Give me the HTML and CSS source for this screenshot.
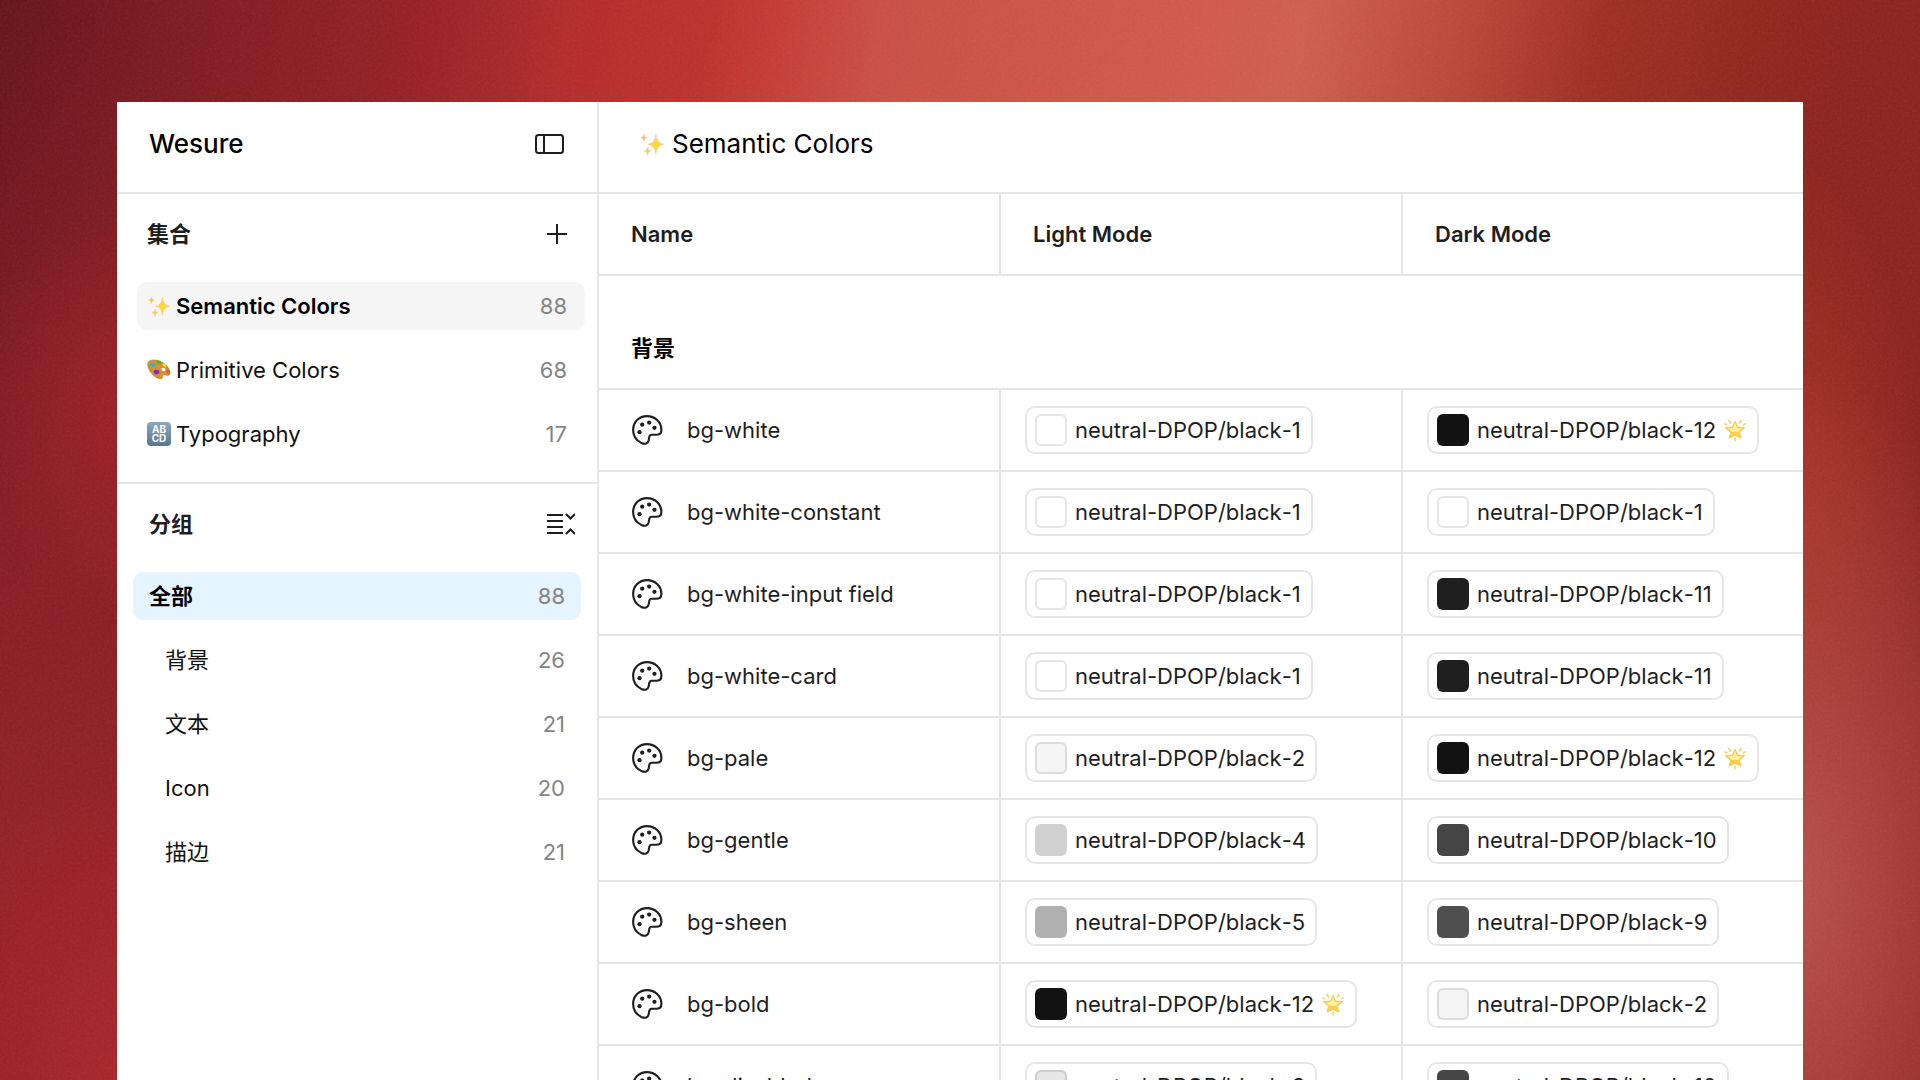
FILE: index.html
```html
<!DOCTYPE html>
<html lang="zh-CN">
<head>
    <meta charset="utf-8">
    <meta name="viewport" content="width=device-width, initial-scale=1">
    <title>Wesure - Semantic Colors</title>
    <link rel="stylesheet" href="styles.css">
</head>
<body>
    <svg class="grain" aria-hidden="true">
        <filter id="noise">
            <feTurbulence type="fractalNoise" baseFrequency="0.4" numOctaves="3" />
            <feColorMatrix type="saturate" values="0" />
        </filter>
        <rect width="100%" height="100%" filter="url(#noise)" />
    </svg>

    <svg class="sprite" aria-hidden="true">
        <symbol id="palette" viewBox="0 0 30 30">
            <path d="M15 2C7.600 2 2 7.600 2 15c0 5 3 9.800 7.600 12.100 3.700 1.600 6.200.8 7-2.600l.6-3.100c.3-1.400 1-1.900 2.200-1.900h4.100c3 0 5-1.600 5-4.600C28.500 7.200 22.300 2 15 2z" fill="none" stroke="#1e1e1e" stroke-width="2" />
            <circle cx="10.500" cy="10" r="2" fill="#1e1e1e" />
            <circle cx="17" cy="8" r="2" fill="#1e1e1e" />
            <circle cx="22" cy="13" r="2" fill="#1e1e1e" />
            <circle cx="8" cy="17" r="2" fill="#1e1e1e" />
        </symbol>
        <symbol id="sparkles" viewBox="0 0 24 24">
            <path d="M15.500 3Q16 11.500 22.500 12.300Q16 13.100 15.500 21.500Q15 13.100 8.500 12.300Q15 11.500 15.500 3z" fill="#fdd835" stroke="#fbc79a" stroke-width=".8" />
            <path d="M4.500 3Q4.800 5.900 7.300 6.200Q4.800 6.500 4.500 9.500Q4.200 6.500 1.700 6.200Q4.200 5.900 4.500 3z" fill="#fcc03c" stroke="#fbc79a" stroke-width=".6" />
            <path d="M8 15Q8.300 18.200 11 18.500Q8.300 18.800 8 22.500Q7.700 18.800 5 18.500Q7.700 18.200 8 15z" fill="#fcc93c" stroke="#fbc79a" stroke-width=".6" />
        </symbol>
        <symbol id="paint" viewBox="0 0 24 24">
            <path d="M1 4.500C2.500 1.500 8 1.200 13 3.200c5.500 2.200 9.300 6.800 10 11.300.3 2.500-1.500 3.300-3.500 2.700-2.300-.7-4-.5-4 1.300 0 1.800-1 2.800-3.200 2.200C6 19.500-.8 9.500 1 4.500z" fill="#d98f2b" stroke="#b8701a" stroke-width=".6" />
            <ellipse cx="16.500" cy="11.500" rx="2.200" ry="1.600" fill="#fff" transform="rotate(30 16.500 11.500)" />
            <ellipse cx="5.500" cy="6.800" rx="3" ry="1.900" fill="#28b5dc" transform="rotate(20 5.500 6.800)" />
            <ellipse cx="11.500" cy="4" rx="2.700" ry="1.500" fill="#3ebc33" transform="rotate(20 11.500 4)" />
            <ellipse cx="17.500" cy="7.200" rx="2.200" ry="1.600" fill="#f4dc23" transform="rotate(40 17.500 7.200)" />
            <ellipse cx="9.500" cy="14" rx="2.800" ry="2.200" fill="#7c2fc4" />
            <ellipse cx="21" cy="13.300" rx="2" ry="1.500" fill="#f0483e" transform="rotate(40 21 13.300)" />
        </symbol>
        <symbol id="star" viewBox="0 0 24 24">
            <path d="M12 3l2.700 6 7 .6-5.200 4.700 1.500 6-6-3-6 3 1.500-6-5.200-4.700 7-.6z" fill="#fdcf45" stroke="#f6c453" stroke-width=".8" stroke-linejoin="round" />
            <path d="M12 5l2 5 5 .5-3.800 3.200H8.800L5 10.500l5-.5z" fill="#fff0a3" />
            <path d="M6 2.500l1.500 2.500M18 2.500l-1.500 2.500M2 6l1.500.7M22 6l-1.500.7M12 20.500v2" stroke="#fbd46b" stroke-width="1.800" stroke-linecap="round" />
        </symbol>
    </svg>

    <div class="window">
        <aside class="sidebar">
            <header class="topbar">
                <h1>Wesure</h1>
                <button class="icon-btn" aria-label="Toggle sidebar">
                    <svg width="30" height="22" viewBox="0 0 30 22" fill="none" stroke="#1e1e1e" stroke-width="2">
                        <rect x="1" y="2" width="27" height="18" rx="2.500" />
                        <path d="M9 2v18" />
                    </svg>
                </button>
            </header>
            <section class="panel collections">
                <div class="panel-head">
                    <h2>集合</h2>
                    <button class="icon-btn" aria-label="Add collection">
                        <svg width="22" height="22" viewBox="0 0 22 22" stroke="#1e1e1e" stroke-width="2">
                            <path d="M12 1v20M2 11h20" />
                        </svg>
                    </button>
                </div>
                <nav class="list">
                    <a class="item selected" href="#"><svg class="emoji"><use href="#sparkles" /></svg>Semantic Colors<span class="count">88</span></a>
                    <a class="item" href="#"><svg class="emoji"><use href="#paint" /></svg>Primitive Colors<span class="count">68</span></a>
                    <a class="item" href="#"><span class="emoji abcd"><span>AB</span><span>CD</span></span>Typography<span class="count">17</span></a>
                </nav>
            </section>
            <section class="panel groups">
                <div class="panel-head">
                    <h2>分组</h2>
                    <button class="icon-btn" aria-label="Collapse groups">
                        <svg width="28" height="22" viewBox="0 0 28 22" fill="none" stroke="#1e1e1e" stroke-width="2">
                            <path d="M0 2h16M0 8h16M0 14h16M0 20h16M19 1l4.500 4.500L28 1M19 21l4.500-4.500L28 21" />
                        </svg>
                    </button>
                </div>
                <nav class="list">
                    <a class="item current" href="#">全部<span class="count">88</span></a>
                    <a class="item child" href="#">背景<span class="count">26</span></a>
                    <a class="item child" href="#">文本<span class="count">21</span></a>
                    <a class="item child" href="#">Icon<span class="count">20</span></a>
                    <a class="item child" href="#">描边<span class="count">21</span></a>
                </nav>
            </section>
        </aside>

        <main class="content">
            <header class="topbar">
                <h2 class="title"><svg class="emoji"><use href="#sparkles" /></svg>Semantic Colors</h2>
            </header>
            <table class="variables">
                <thead>
                    <tr><th scope="col">Name</th><th scope="col">Light Mode</th><th scope="col">Dark Mode</th></tr>
                </thead>
                <tbody>
                    <tr class="group"><th colspan="3" scope="rowgroup">背景</th></tr>
                    <tr>
                        <td><div class="name"><svg class="type"><use href="#palette" /></svg>bg-white</div></td>
                        <td><span class="pill"><i class="swatch black-1"></i>neutral-DPOP/black-1</span></td>
                        <td><span class="pill"><i class="swatch black-12"></i>neutral-DPOP/black-12<svg class="star"><use href="#star" /></svg></span></td>
                    </tr>
                    <tr>
                        <td><div class="name"><svg class="type"><use href="#palette" /></svg>bg-white-constant</div></td>
                        <td><span class="pill"><i class="swatch black-1"></i>neutral-DPOP/black-1</span></td>
                        <td><span class="pill"><i class="swatch black-1"></i>neutral-DPOP/black-1</span></td>
                    </tr>
                    <tr>
                        <td><div class="name"><svg class="type"><use href="#palette" /></svg>bg-white-input field</div></td>
                        <td><span class="pill"><i class="swatch black-1"></i>neutral-DPOP/black-1</span></td>
                        <td><span class="pill"><i class="swatch black-11"></i>neutral-DPOP/black-11</span></td>
                    </tr>
                    <tr>
                        <td><div class="name"><svg class="type"><use href="#palette" /></svg>bg-white-card</div></td>
                        <td><span class="pill"><i class="swatch black-1"></i>neutral-DPOP/black-1</span></td>
                        <td><span class="pill"><i class="swatch black-11"></i>neutral-DPOP/black-11</span></td>
                    </tr>
                    <tr>
                        <td><div class="name"><svg class="type"><use href="#palette" /></svg>bg-pale</div></td>
                        <td><span class="pill"><i class="swatch black-2"></i>neutral-DPOP/black-2</span></td>
                        <td><span class="pill"><i class="swatch black-12"></i>neutral-DPOP/black-12<svg class="star"><use href="#star" /></svg></span></td>
                    </tr>
                    <tr>
                        <td><div class="name"><svg class="type"><use href="#palette" /></svg>bg-gentle</div></td>
                        <td><span class="pill"><i class="swatch black-4"></i>neutral-DPOP/black-4</span></td>
                        <td><span class="pill"><i class="swatch black-10"></i>neutral-DPOP/black-10</span></td>
                    </tr>
                    <tr>
                        <td><div class="name"><svg class="type"><use href="#palette" /></svg>bg-sheen</div></td>
                        <td><span class="pill"><i class="swatch black-5"></i>neutral-DPOP/black-5</span></td>
                        <td><span class="pill"><i class="swatch black-9"></i>neutral-DPOP/black-9</span></td>
                    </tr>
                    <tr>
                        <td><div class="name"><svg class="type"><use href="#palette" /></svg>bg-bold</div></td>
                        <td><span class="pill"><i class="swatch black-12"></i>neutral-DPOP/black-12<svg class="star"><use href="#star" /></svg></span></td>
                        <td><span class="pill"><i class="swatch black-2"></i>neutral-DPOP/black-2</span></td>
                    </tr>
                    <tr>
                        <td><div class="name"><svg class="type"><use href="#palette" /></svg>bg-disabled</div></td>
                        <td><span class="pill"><i class="swatch black-3"></i>neutral-DPOP/black-3</span></td>
                        <td><span class="pill"><i class="swatch black-10"></i>neutral-DPOP/black-10</span></td>
                    </tr>
                </tbody>
            </table>
        </main>
    </div>
</body>
</html>
```
FILE: styles.css
```css
* {
    box-sizing: border-box;
}
body {
    margin: 0;
    height: 100vh;
    overflow: hidden;
    padding: 102px 117px 0;
    font-family: Inter, "Noto Sans CJK SC", sans-serif;
    font-size: 22px;
    line-height: 32px;
    color: #1e1e1e;
    background:
        radial-gradient(ellipse 160px 200px at 7% 38%, rgba(172, 34, 40, 0.6), transparent),
        radial-gradient(ellipse 260px 340px at 7% 100%, rgba(182, 40, 44, 0.7), transparent),
        radial-gradient(ellipse 260px 520px at 93% 82%, rgba(188, 84, 78, 0.95), rgba(184, 72, 66, 0.6) 50%, transparent),
        radial-gradient(ellipse 170px 320px at 92% 44%, rgba(176, 50, 40, 0.8), transparent),
        radial-gradient(ellipse 400px 800px at 0 75%, rgba(150, 32, 38, 0.8), transparent),
        linear-gradient(100deg, #65121a 0, #7e1920 9%, #961f24 20%, #b22a2a 27%, #c0302a 34%, #cb4e43 42%, #cf5646 52%, #d05e4e 62%, #b94535 70%, #a02d22 76%, #8e241c 85%, #84201c 100%);
}
.grain {
    position: absolute;
    top: 0;
    left: 0;
    width: 100%;
    height: 100%;
    opacity: 0.08;
}
.sprite {
    display: none;
}
.window {
    position: relative;
    display: flex;
    min-height: 100vh;
    background: #fff;
}
h1, h2 {
    margin: 0;
    font-size: 22px;
    font-weight: 600;
}
a {
    color: #111;
    text-decoration: none;
}

/* sidebar */
.sidebar {
    flex: 0 0 482px;
    border-right: 2px solid #e6e6e6;
}
.topbar {
    display: flex;
    align-items: center;
    justify-content: space-between;
    height: 92px;
    padding: 0 32px 6px;
    border-bottom: 2px solid #e6e6e6;
    color: #000;
}
.topbar h1 {
    font-size: 26px;
    font-weight: 500;
}
.icon-btn {
    display: flex;
    padding: 0;
    border: none;
    background: none;
    cursor: pointer;
}
.panel-head {
    display: flex;
    align-items: center;
    justify-content: space-between;
    height: 80px;
}
.collections {
    padding: 0 12px 24px 20px;
    border-bottom: 2px solid #e6e6e6;
}
.collections .panel-head {
    padding: 0 18px 0 10px;
}
.groups {
    padding: 0 16px;
}
.groups .panel-head {
    padding: 0 6px 0 16px;
}
.list {
    display: flex;
    flex-direction: column;
    gap: 16px;
    padding-top: 8px;
}
.item {
    display: flex;
    align-items: center;
    height: 48px;
    padding: 0 18px 0 10px;
    border-radius: 10px;
}
.groups .item {
    padding: 0 16px;
}
.groups .child {
    padding-left: 32px;
}
.item.selected {
    background: #f5f5f5;
    color: #000;
    font-weight: 600;
}
.item.current {
    background: #e5f4ff;
    color: #000;
    font-weight: 600;
}
.count {
    margin-left: auto;
    color: #858585;
    font-weight: 400;
}
.emoji {
    width: 24px;
    height: 24px;
    margin-right: 5px;
}
.abcd {
    display: flex;
    flex-direction: column;
    justify-content: center;
    border-radius: 4px;
    background: linear-gradient(#8fa6bf, #5b7690);
    color: #fff;
    font-size: 10px;
    font-weight: 700;
    line-height: 9px;
    text-align: center;
}

/* variables table */
.content {
    flex: 1;
}
.content .topbar {
    padding-left: 40px;
}
.title {
    display: flex;
    align-items: center;
    font-size: 26px;
    font-weight: 400;
}
.title .emoji {
    width: 26px;
    height: 26px;
    margin-right: 7px;
}
.variables {
    width: 100%;
    table-layout: fixed;
    border-spacing: 0;
}
.variables th, .variables td {
    height: 82px;
    padding: 0 24px;
    border-right: 2px solid #e6e6e6;
    border-bottom: 2px solid #e6e6e6;
    text-align: left;
}
.variables th {
    width: 402px;
    padding: 0 32px;
    font-weight: 600;
}
.variables th:last-child, .variables td:last-child {
    width: auto;
    border-right: none;
}
.variables .group th {
    height: 114px;
    padding-top: 32px;
    color: #000;
}
.name {
    display: flex;
    align-items: center;
    gap: 24px;
    padding-left: 8px;
}
.type {
    width: 32px;
    height: 32px;
}
.pill {
    display: inline-flex;
    align-items: center;
    height: 48px;
    padding: 0 10px 0 8px;
    border: 2px solid #e6e6e6;
    border-radius: 10px;
    vertical-align: middle;
    font-kerning: none;
}
.swatch {
    width: 32px;
    height: 32px;
    margin-right: 8px;
    border: 2px solid rgba(0, 0, 0, 0.1);
    border-radius: 6px;
}
.star {
    width: 24px;
    height: 24px;
    margin-left: 7px;
}
.black-1 { background: #fff; }
.black-2 { background: #f5f5f5; }
.black-3 { background: #e6e6e6; }
.black-4 { background: #d1d1d1; border: none; }
.black-5 { background: #b0b0b0; border: none; }
.black-9 { background: #4f4f4f; border: none; }
.black-10 { background: #454545; border: none; }
.black-11 { background: #1f1f1f; border: none; }
.black-12 { background: #121212; border: none; }
```
